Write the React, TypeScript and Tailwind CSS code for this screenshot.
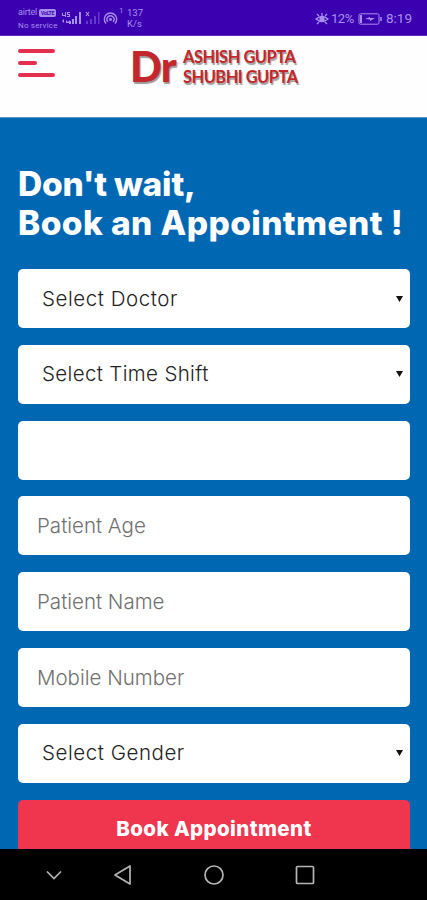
import type { ReactNode } from 'react';

function StatusBar() {
  return (
    <div className="flex h-9 shrink-0 items-start justify-between border-b border-[#5a2cc4] bg-[#3b00b0] pl-[18px] pr-[15px] pt-[7px] font-['Roboto',sans-serif] text-[#a890ee]">
      <div className="flex items-start">
        <div className="w-[43px] text-[8px] leading-[13px] whitespace-nowrap">
          <div className="-mt-px flex items-center gap-[2px] text-[9px] tracking-[-0.2px]">
            airtel
            <span className="rounded-[2px] bg-[#a890ee] px-[2px] text-[5px] font-bold leading-[8px] text-[#3b00b0]">
              VoLTE
            </span>
          </div>
          <div className="tracking-[0.2px]">No service</div>
        </div>
        <svg className="mt-[2px] h-4 w-[21px]" viewBox="0 0 21 16" fill="currentColor">
          <path d="M1 4h1v2h2V3h1v5H4V7H1zM6 3h3v1H7v1h2v3H6V7h2V6H6zM1 12l2-2v4zM5 11l2 2 2-2v3H5z" />
          <path d="M8 12h2v3H8zM11 10h2v5h-2zM14 7h2v8h-2zM18 3h2v12h-2z" />
        </svg>
        <svg className="ml-[2px] mt-[2px] h-4 w-4" viewBox="0 0 16 16" fill="currentColor">
          <path d="M2 3l3 4M5 3L2 7" stroke="currentColor" strokeWidth="1.2" />
          <path opacity=".4" d="M2 12h2v3H2zM6 10h2v5H6zM10 7h2v8h-2zM14 3h1.5v12H14z" />
        </svg>
        <svg className="ml-[3px] mt-[4px] h-[15px] w-[15px]" viewBox="0 0 15 15" fill="none" stroke="currentColor" strokeWidth="1.4">
          <path d="M3 12.5a6.2 6.2 0 1 1 9 0M5 10.8a3.5 3.5 0 1 1 5 0" />
          <circle cx="7.5" cy="8.5" r="1.4" fill="currentColor" stroke="none" />
        </svg>
        <span className="ml-px w-[8px] text-[8px] leading-[8px]">1</span>
        <div className="w-[15px] text-center text-[9.5px] leading-[11px]">
          <div>137</div>
          <div>K/s</div>
        </div>
      </div>
      <div className="flex h-[23px] items-center text-[13px]">
        <svg className="mr-[2px] h-[13px] w-[14px]" viewBox="0 0 14 13" fill="none" stroke="currentColor" strokeWidth="1.3">
          <path d="M1 7Q7 2 13 7Q7 12 1 7z" />
          <circle cx="7" cy="7" r="2" fill="currentColor" />
          <path d="M7 1v3M2 2l2 2M12 2l-2 2M2 12l2-2M12 12l-2-2" />
        </svg>
        <span className="w-[26px] tracking-[-0.4px]">12%</span>
        <svg className="ml-px mr-[4px] h-[12px] w-[24px]" viewBox="0 0 24 12" fill="none" stroke="currentColor">
          <rect x="1" y=".8" width="20" height="10.4" rx="1.5" />
          <path d="M3 2v8" strokeWidth="2" />
          <path d="M23 4v4" strokeWidth="1.5" />
          <path d="M7 6l5-2v1h5l-5 3V6.5z" fill="currentColor" stroke="none" />
        </svg>
        <span className="text-[13.5px]">8:19</span>
      </div>
    </div>
  );
}

function Header() {
  return (
    <header className="flex h-[81px] shrink-0 items-start bg-[#fefefe] pl-[18px]">
      <button className="mt-[13px] flex w-[37px] flex-col gap-2" aria-label="Menu">
        <span className="h-1 w-full rounded-full bg-[#e4304f]" />
        <span className="h-1 w-[19px] rounded-full bg-[#e4304f]" />
        <span className="h-1 w-full rounded-full bg-[#e4304f]" />
      </button>
      <div className="ml-[75px] mt-[11px] flex whitespace-nowrap font-['Lato',sans-serif] text-[#c3262b] [text-shadow:1px_2px_1px_#9a9a9a]">
        <span className="w-[53px] text-[42px] font-black leading-[38px] tracking-[-1px]">Dr</span>
        <div className="text-[16.5px] font-bold leading-[20px]">
          <div className="tracking-[-0.5px]">ASHISH GUPTA</div>
          <div className="tracking-[-0.55px]">SHUBHI GUPTA</div>
        </div>
      </div>
    </header>
  );
}

function SelectField({ children }: { children: ReactNode }) {
  return (
    <button
      type="button"
      className="flex h-[59px] items-center justify-between rounded-[5px] bg-white pl-6 pr-[7px] text-left text-[20.5px] leading-[28px] font-light text-[#222]"
    >
      {children}
      <svg className="h-[6px] w-[7px]" viewBox="0 0 7 6" fill="#111">
        <path d="M0 0h7L3.5 6z" />
      </svg>
    </button>
  );
}

function InputField({ placeholder }: { placeholder?: string }) {
  return (
    <input
      type="text"
      placeholder={placeholder}
      className="h-[59px] rounded-[5px] bg-white px-[19px] text-[20.5px] font-light text-[#222] placeholder:text-[#707070]"
    />
  );
}

function NavBar() {
  return (
    <nav className="flex h-[51px] shrink-0 items-center bg-black pl-[45px] text-[#b5b5b5]">
      <svg className="h-6 w-[18px]" viewBox="0 0 18 24" fill="none" stroke="currentColor" strokeWidth="1.7">
        <path d="M2 8.5l7 7 7-7" />
      </svg>
      <svg className="ml-[49px] h-6 w-6" viewBox="0 0 24 24" fill="none" stroke="currentColor" strokeWidth="1.7">
        <path d="M18 3v18L3 12z" strokeLinejoin="round" />
      </svg>
      <svg className="ml-[66px] h-6 w-6" viewBox="0 0 24 24" fill="none" stroke="currentColor" strokeWidth="1.7">
        <circle cx="12" cy="12" r="9" />
      </svg>
      <svg className="ml-[67px] h-6 w-6" viewBox="0 0 24 24" fill="none" stroke="currentColor" strokeWidth="1.7">
        <rect x="3.5" y="3.5" width="17" height="17" rx="1" />
      </svg>
    </nav>
  );
}

export default function App() {
  return (
    <div className="flex h-[900px] w-[427px] flex-col overflow-hidden font-['Inter',sans-serif]">
      <StatusBar />
      <Header />
      <main className="min-h-0 flex-1 overflow-hidden border-t border-[#4a93c9] bg-[#0067b3] px-[18px] pt-[47px]">
        <h1 className="whitespace-nowrap text-[33.5px] font-extrabold leading-[39px] text-white">
          <span className="tracking-[-0.2px]">Don't wait,</span>
          <br />
          <span className="tracking-[0.4px]">Book an Appointment !</span>
        </h1>
        <form className="mt-[26px] flex w-[392px] flex-col gap-[16.8px]">
          <SelectField>
            <span className="tracking-[0.55px]">Select Doctor</span>
          </SelectField>
          <SelectField>
            <span className="tracking-[0.35px]">Select Time Shift</span>
          </SelectField>
          <InputField />
          <InputField placeholder="Patient Age" />
          <InputField placeholder="Patient Name" />
          <InputField placeholder="Mobile Number" />
          <SelectField>
            <span className="tracking-[0.55px]">Select Gender</span>
          </SelectField>
          <button type="button" className="h-[59px] rounded-[5px] bg-[#f0354f] text-[20.5px] font-extrabold tracking-[0.4px] text-white">
            Book Appointment
          </button>
        </form>
      </main>
      <NavBar />
    </div>
  );
}
